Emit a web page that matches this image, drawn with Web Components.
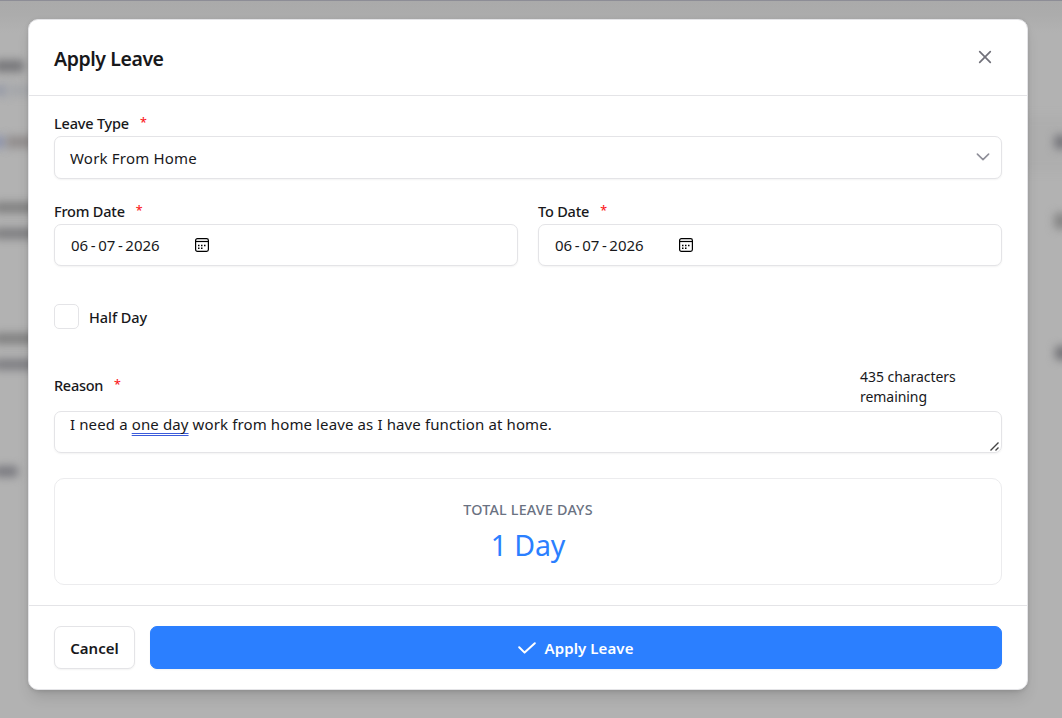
<!DOCTYPE html>
<html lang="en">
<head>
<meta charset="utf-8">
<title>Apply Leave</title>
<style>
    body {
        margin: 0;
        height: 718px;
        overflow: hidden;
        font-family: "Noto Sans", "Open Sans", sans-serif;
        font-size: 15px;
        color: #18181b;
        background: #b2b2b2;
    }

    .row {
        display: grid;
        grid-template-columns: 1fr 1fr;
        gap: 20px;
        margin-top: 22px;
    }
</style>
</head>
<body>
    <page-backdrop></page-backdrop>
    <leave-dialog>
        <span slot="title">Apply Leave</span>

        <form-field label="Leave Type">
            <select-box>Work From Home</select-box>
        </form-field>

        <div class="row">
            <form-field label="From Date">
                <date-box>06-07-2026</date-box>
            </form-field>
            <form-field label="To Date">
                <date-box>06-07-2026</date-box>
            </form-field>
        </div>

        <check-box style="margin-top: 38px">Half Day</check-box>

        <reason-field style="margin-top: 38px">
            <span slot="count">435 characters remaining</span>
            I need a <u>one day</u> work from home leave as I have function at home.
        </reason-field>

        <total-card style="margin-top: 25px" value="1 Day">TOTAL LEAVE DAYS</total-card>

        <action-button slot="footer">Cancel</action-button>
        <action-button slot="footer" primary>Apply Leave</action-button>
    </leave-dialog>

<script>
class PageBackdrop extends HTMLElement {
    constructor() {
        super();
        this.attachShadow({ mode: 'open' });
        this.shadowRoot.innerHTML = /* html */`
            <style>
                :host {
                    position: absolute;
                    inset: 0;
                    overflow: hidden;
                    background: linear-gradient(#aaa 0, #acacac 14px, #b2b2b2 32px);
                    border-top: 1px solid #8d8d96;
                }

                i {
                    position: absolute;
                    border-radius: 4px;
                    filter: blur(4px);
                }
            </style>
            <i style="left:-6px;top:59px;width:30px;height:12px;background:#77777a"></i>
            <i style="left:-6px;top:84px;width:14px;height:11px;background:#989ca8"></i>
            <i style="left:8px;top:84px;width:26px;height:11px;background:#a4a6aa"></i>
            <i style="left:-6px;top:135px;width:12px;height:12px;background:#8c93ad"></i>
            <i style="left:6px;top:135px;width:30px;height:12px;background:#918d8d"></i>
            <i style="left:-6px;top:201px;width:44px;height:11px;background:#808080"></i>
            <i style="left:-6px;top:227px;width:44px;height:11px;background:#7e7e80"></i>
            <i style="left:-6px;top:332px;width:44px;height:11px;background:#808080"></i>
            <i style="left:-6px;top:358px;width:44px;height:11px;background:#7e7e82"></i>
            <i style="left:-6px;top:465px;width:24px;height:11px;background:#7a7a80"></i>
            <i style="left:1020px;top:115px;width:60px;height:55px;background:#aeaeae"></i>
            <i style="left:1054px;top:134px;width:16px;height:14px;background:#77777c"></i>
            <i style="left:1054px;top:212px;width:16px;height:16px;background:#868686"></i>
            <i style="left:1055px;top:345px;width:16px;height:14px;background:#747478"></i>
        `;
    }
}

class LeaveDialog extends HTMLElement {
    constructor() {
        super();
        this.attachShadow({ mode: 'open' });
        this.shadowRoot.innerHTML = /* html */`
            <style>
                :host {
                    position: relative;
                    display: flex;
                    flex-direction: column;
                    box-sizing: border-box;
                    width: 1000px;
                    height: 671px;
                    margin: 19px 0 0 28px;
                    background: #fff;
                    border: 1px solid #e4e4e7;
                    border-radius: 10px;
                    box-shadow: 0 10px 15px -3px rgba(0, 0, 0, .12), 0 4px 6px -4px rgba(0, 0, 0, .12), 0 0 4px rgba(0, 0, 0, .08);
                }

                header {
                    display: flex;
                    align-items: center;
                    justify-content: space-between;
                    box-sizing: border-box;
                    height: 76px;
                    padding: 2px 35px 0 25px;
                    border-bottom: 1px solid #e4e4e7;
                }

                h2 {
                    margin: 0;
                    font-size: 19.5px;
                    font-weight: 600;
                    letter-spacing: -0.43px;
                }

                svg {
                    display: block;
                    margin-top: -3px;
                }

                main {
                    flex: 1;
                    padding: 17px 25px 0;
                }

                footer {
                    display: flex;
                    gap: 15px;
                    padding: 20px 25px;
                    border-top: 1px solid #e4e4e7;
                }
            </style>
            <header>
                <h2><slot name="title"></slot></h2>
                <svg width="14" height="14" fill="none" stroke="#71717a" stroke-width="1.7" stroke-linecap="round">
                    <path d="M1.7 1.7 12.3 12.3M12.3 1.7 1.7 12.3"/>
                </svg>
            </header>
            <main><slot></slot></main>
            <footer><slot name="footer"></slot></footer>
        `;
    }
}

const labelStyles = /* css */`
    .label {
        display: flex;
        gap: 11px;
        font-size: 14.5px;
        font-weight: 500;
        letter-spacing: -0.2px;
    }

    .label b {
        color: #fb1c26;
        font-size: 12.5px;
        font-weight: 500;
    }
`;

class FormField extends HTMLElement {
    constructor() {
        super();
        this.attachShadow({ mode: 'open' });
        this.shadowRoot.innerHTML = /* html */`
            <style>
                ${labelStyles}
                :host {
                    display: block;
                }

                .label {
                    height: 23px;
                    line-height: 20px;
                }
            </style>
            <label class="label"><span>${this.getAttribute('label')}</span><b>*</b></label>
            <slot></slot>
        `;
    }
}

const boxStyles = /* css */`
    :host {
        display: flex;
        align-items: center;
        box-sizing: border-box;
        border: 1px solid #e4e4e7;
        border-radius: 7px;
        background: #fff;
        box-shadow: 0 1px 2px rgba(0, 0, 0, .05);
    }
`;

class SelectBox extends HTMLElement {
    constructor() {
        super();
        this.attachShadow({ mode: 'open' });
        this.shadowRoot.innerHTML = /* html */`
            <style>
                ${boxStyles}
                :host {
                    justify-content: space-between;
                    height: 43px;
                    padding: 0 11px 0 15px;
                    letter-spacing: 0.2px;
                }

                svg {
                    margin-top: -2px;
                }
            </style>
            <slot></slot>
            <svg width="14" height="8" fill="none" stroke="#8f8f99" stroke-width="1.6" stroke-linecap="round" stroke-linejoin="round">
                <path d="M1.4 1.1 7 6.6 12.6 1.1"/>
            </svg>
        `;
    }
}

class DateBox extends HTMLElement {
    constructor() {
        super();
        this.attachShadow({ mode: 'open' });
        this.shadowRoot.innerHTML = /* html */`
            <style>
                ${boxStyles}
                :host {
                    height: 42px;
                    padding: 0 16px;
                }

                .value {
                    display: flex;
                    width: 124px;
                }

                .value i {
                    width: 10px;
                    font-style: normal;
                    text-align: center;
                }
            </style>
            <span class="value"></span>
            <svg width="14" height="14" fill="none" stroke="#000" stroke-width="1.2">
                <rect x=".6" y=".6" width="12.8" height="12.8" rx="1.8"/>
                <path d="M.6 3.5H13.4"/>
                <path d="M3 7.4h1.5m1.5 0h1.5m1.5 0h1.5M3 10.2h1.5m1.5 0h1.5" stroke-width="1.5"/>
            </svg>
        `;
    }

    connectedCallback() {
        const value = this.shadowRoot.querySelector('.value');
        value.innerHTML = this.textContent.trim().split('-').map(part => `<span>${part}</span>`).join('<i>-</i>');
    }
}

class CheckBox extends HTMLElement {
    constructor() {
        super();
        this.attachShadow({ mode: 'open' });
        this.shadowRoot.innerHTML = /* html */`
            <style>
                :host {
                    display: flex;
                    align-items: center;
                    gap: 10px;
                    height: 25px;
                    font-size: 14.5px;
                    font-weight: 500;
                    letter-spacing: -0.05px;
                }

                .box {
                    box-sizing: border-box;
                    width: 25px;
                    height: 25px;
                    border: 1px solid #e4e4e7;
                    border-radius: 5px;
                }
            </style>
            <span class="box"></span>
            <slot></slot>
        `;
    }
}

class ReasonField extends HTMLElement {
    constructor() {
        super();
        this.attachShadow({ mode: 'open' });
        this.shadowRoot.innerHTML = /* html */`
            <style>
                ${labelStyles}
                :host {
                    display: block;
                }

                .top {
                    display: flex;
                    align-items: center;
                    justify-content: space-between;
                    height: 40px;
                    margin-bottom: 4px;
                }

                .label {
                    padding-bottom: 5px;
                    line-height: 20px;
                    letter-spacing: -0.3px;
                }

                .count {
                    width: 142px;
                    font-size: 14px;
                    line-height: 20px;
                    letter-spacing: -0.05px;
                }

                .area {
                    position: relative;
                    box-sizing: border-box;
                    height: 42px;
                    padding: 1px 15px;
                    border: 1px solid #e4e4e7;
                    border-radius: 7px;
                    line-height: 22px;
                    letter-spacing: 0.12px;
                    box-shadow: 0 1px 2px rgba(0, 0, 0, .05);
                }

                ::slotted(u) {
                    text-decoration: underline double #3b5bdb 1px;
                    text-underline-offset: 3px;
                    text-decoration-skip-ink: none;
                }

                svg {
                    position: absolute;
                    right: 2px;
                    bottom: 1px;
                }
            </style>
            <div class="top">
                <span class="label"><span>Reason</span><b>*</b></span>
                <span class="count"><slot name="count"></slot></span>
            </div>
            <div class="area">
                <slot></slot>
                <svg width="9" height="9" stroke="#444" stroke-width="1.4">
                    <path d="M.5 8.5 8.5.5M5.5 8.5 8.5 5.5"/>
                </svg>
            </div>
        `;
    }
}

class TotalCard extends HTMLElement {
    constructor() {
        super();
        this.attachShadow({ mode: 'open' });
        this.shadowRoot.innerHTML = /* html */`
            <style>
                :host {
                    display: block;
                    box-sizing: border-box;
                    height: 107px;
                    padding-top: 20px;
                    border: 1px solid #ececee;
                    border-radius: 10px;
                    text-align: center;
                }

                .caption {
                    height: 24px;
                    line-height: 21px;
                    font-size: 14.3px;
                    font-weight: 500;
                    letter-spacing: 0.22px;
                    color: #6a7282;
                }

                .value {
                    line-height: 44px;
                    font-size: 28.5px;
                    letter-spacing: -0.1px;
                    color: #2b7fff;
                }
            </style>
            <div class="caption"><slot></slot></div>
            <div class="value">${this.getAttribute('value')}</div>
        `;
    }
}

class ActionButton extends HTMLElement {
    constructor() {
        super();
        this.attachShadow({ mode: 'open' });
        const check = /* html */`
            <svg width="18" height="12" fill="none" stroke="#fff" stroke-width="2" stroke-linecap="round" stroke-linejoin="round">
                <path d="M1.2 5.2 6.6 10.6 16.8 1.2"/>
            </svg>
        `;
        this.shadowRoot.innerHTML = /* html */`
            <style>
                ${boxStyles}
                :host {
                    justify-content: center;
                    gap: 8px;
                    width: 81px;
                    height: 43px;
                    font-weight: 600;
                    letter-spacing: 0;
                }

                :host([primary]) {
                    flex: 1;
                    border-color: #2b7fff;
                    background: #2b7fff;
                    color: #fff;
                    letter-spacing: 0.1px;
                }
            </style>
            ${this.hasAttribute('primary') ? check : ''}
            <slot></slot>
        `;
    }
}

window.customElements.define("page-backdrop", PageBackdrop);
window.customElements.define("leave-dialog", LeaveDialog);
window.customElements.define("form-field", FormField);
window.customElements.define("select-box", SelectBox);
window.customElements.define("date-box", DateBox);
window.customElements.define("check-box", CheckBox);
window.customElements.define("reason-field", ReasonField);
window.customElements.define("total-card", TotalCard);
window.customElements.define("action-button", ActionButton);
</script>
</body>
</html>
